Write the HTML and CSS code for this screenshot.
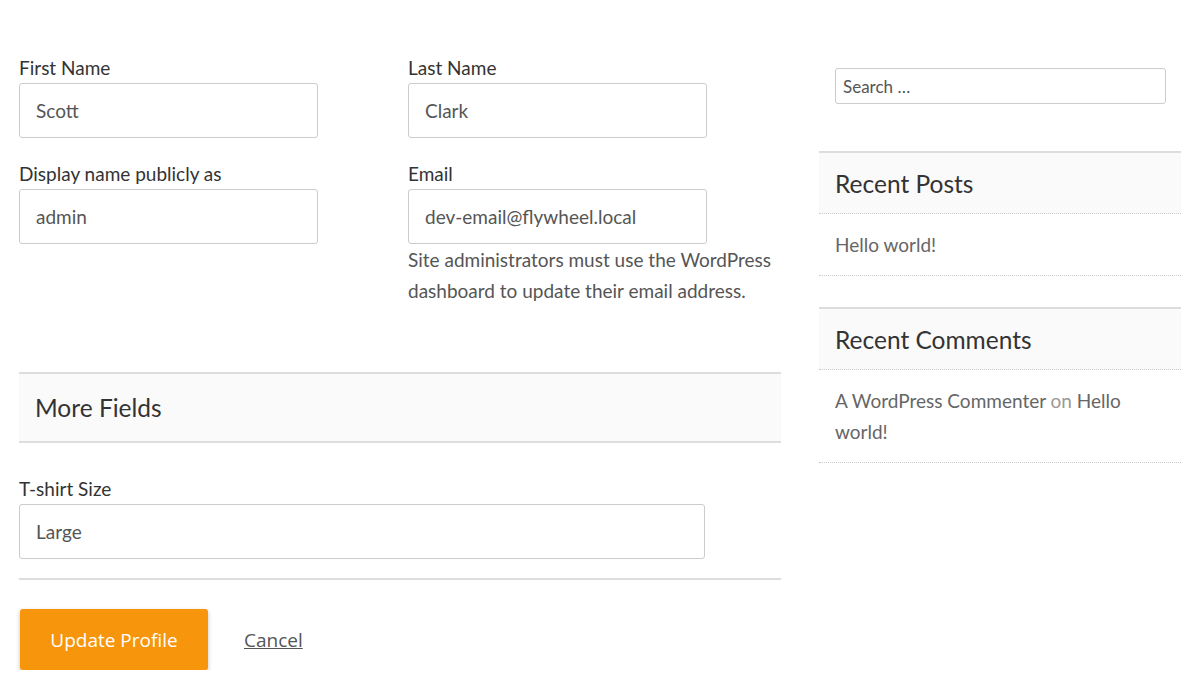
FILE: index.html
```html
<!DOCTYPE html>
<html>
<head>
<meta charset="utf-8">
<link rel="stylesheet" href="styles.css">
</head>
<body>
<div class="page">
  <main class="main">
    <form class="form">
      <div class="grid">
        <div class="field">
          <label class="label">First Name</label>
          <input class="input short" type="text" value="Scott">
        </div>
        <div class="field">
          <label class="label">Last Name</label>
          <input class="input short" type="text" value="Clark">
        </div>
        <div class="field">
          <label class="label">Display name publicly as</label>
          <input class="input short" type="text" value="admin">
        </div>
        <div class="field">
          <label class="label">Email</label>
          <input class="input short" type="text" value="dev-email@flywheel.local">
          <p class="help">Site administrators must use the WordPress dashboard to update their email address.</p>
        </div>
      </div>
      <h3 class="band">More Fields</h3>
      <div class="field wide-field">
        <label class="label">T-shirt Size</label>
        <input class="input wide" type="text" value="Large">
      </div>
      <hr class="rule">
      <div class="actions">
        <button class="btn" type="button">Update Profile</button>
        <a class="cancel" href="#">Cancel</a>
      </div>
    </form>
  </main>
  <aside class="sidebar">
    <div class="search-wrap">
      <input class="search" type="text" placeholder="Search …">
    </div>
    <section class="widget">
      <h2 class="widget-title">Recent Posts</h2>
      <ul class="list">
        <li><a href="#">Hello world!</a></li>
      </ul>
    </section>
    <section class="widget">
      <h2 class="widget-title">Recent Comments</h2>
      <ul class="list">
        <li><a href="#">A WordPress Commenter</a> <span class="muted">on</span> <a href="#">Hello world!</a></li>
      </ul>
    </section>
  </aside>
</div>
</body>
</html>
```
FILE: styles.css
```css
* { box-sizing: border-box; }
body {
  margin: 0;
  background: #fff;
  font-family: Lato, "Open Sans", sans-serif;
  color: #333;
}
.page {
  display: grid;
  grid-template-columns: 762px 362px;
  column-gap: 38px;
  padding-left: 19px;
}
.form { margin: 0; padding-top: 54px; }
.grid {
  display: grid;
  grid-template-columns: 389px 373px;
  row-gap: 22px;
}
.field { display: flex; flex-direction: column; align-items: flex-start; }
.label {
  font-size: 19px;
  line-height: 27px;
  color: #333;
  margin-bottom: 2px;
}
.input {
  height: 55px;
  border: 1px solid #ccc;
  border-radius: 3px;
  padding: 0 16px;
  font-family: Lato, sans-serif;
  font-size: 19px;
  color: #555;
  background: #fff;
}
.short { width: 299px; }
.wide { width: 686px; height: 55px; }
.help {
  margin: 0;
  font-size: 19px;
  line-height: 31px;
  color: #555;
}
.band {
  margin: 66px 0 0;
  height: 71px;
  display: flex;
  align-items: center;
  padding-left: 16px;
  background: #fafafa;
  border-top: 2px solid #ddd;
  border-bottom: 2px solid #ddd;
  font-weight: 400;
  font-size: 24.5px;
  color: #333;
}
.wide-field { margin-top: 32px; }
.rule {
  margin: 19px 0 0;
  border: 0;
  border-top: 2px solid #ddd;
}
.actions {
  display: flex;
  align-items: center;
  gap: 36px;
  margin-top: 29px;
  padding-left: 1px;
}
.btn {
  width: 188px;
  height: 61px;
  background: #f7950c;
  border: 0;
  border-radius: 3px;
  color: #fff;
  font-family: "Open Sans", sans-serif;
  font-size: 19px;
  box-shadow: 0 2px 4px rgba(0,0,0,0.25);
}
.cancel {
  font-family: "Open Sans", sans-serif;
  font-size: 19px;
  color: #555;
  text-decoration: underline;
}
.sidebar { padding-top: 68px; }
.search-wrap { padding: 0 15px 0 16px; }
.search {
  width: 100%;
  height: 36px;
  border: 1px solid #ccc;
  border-radius: 3px;
  padding: 0 7px;
  font-family: Lato, sans-serif;
  font-size: 17px;
  color: #555;
}
.search::placeholder { color: #555; }
.widget { margin-top: 47px; }
.widget + .widget { margin-top: 31px; }
.widget-title {
  margin: 0;
  height: 63px;
  display: flex;
  align-items: center;
  padding-left: 16px;
  background: #fafafa;
  border-top: 2px solid #ddd;
  border-bottom: 1px dotted #ccc;
  font-weight: 400;
  font-size: 24.5px;
  color: #333;
}
.list { list-style: none; margin: 0; padding: 0; }
.list li {
  padding: 15px 16px;
  border-bottom: 1px dotted #ccc;
  font-size: 19px;
  line-height: 31px;
}
.list a { color: #666; text-decoration: none; }
.muted { color: #999; }
```
